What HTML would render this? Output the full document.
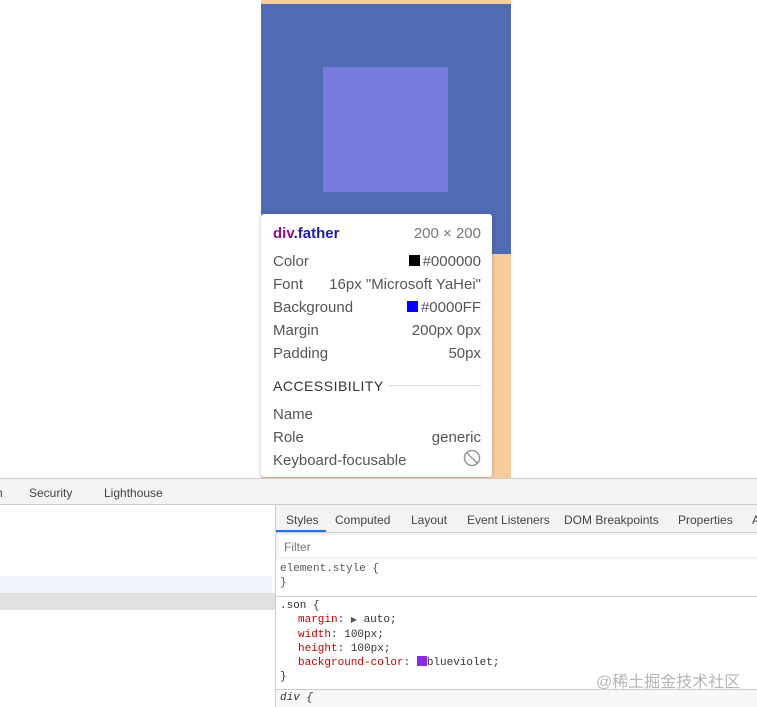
<!DOCTYPE html>
<html><head><style>
*{margin:0;padding:0;box-sizing:border-box}
body{width:757px;height:707px;position:relative;overflow:hidden;background:#fff;font-family:"Liberation Sans","Noto Sans CJK SC",sans-serif}
.a{position:absolute}
.row{position:absolute;left:12px;right:11px;display:flex;justify-content:space-between;font-size:15px;color:#555}
.mono{font-family:"Liberation Mono",monospace;font-size:11px;color:#333}
.tab{position:absolute;top:8px;font-size:12px;color:#444}
.p{color:#c80000}
.ind{padding-left:18px}
</style></head><body>
<div class="a" style="left:261px;top:0;width:250px;height:478px;background:#f9cc9d"></div>
<div class="a" style="left:261px;top:4px;width:250px;height:250px;background:#4f6bb4"></div>
<div class="a" style="left:323px;top:67px;width:125px;height:125px;background:#777bdc"></div>
<div class="a" style="left:261px;top:214px;width:231px;height:263px;background:#fff;border-radius:3px;box-shadow:0 1px 4px rgba(0,0,0,.25)">
 <div class="row" style="top:11px"><span style="font-weight:bold;color:#881280">div<span style="color:#1a1aa6">.father</span></span><span style="color:#777">200 × 200</span></div>
 <div class="row" style="top:39px"><span>Color</span><span><span style="display:inline-block;width:11px;height:11px;background:#000;margin-right:3px"></span>#000000</span></div>
 <div class="row" style="top:62px"><span>Font</span><span>16px "Microsoft YaHei"</span></div>
 <div class="row" style="top:85px"><span>Background</span><span><span style="display:inline-block;width:11px;height:11px;background:#00f;margin-right:3px"></span>#0000FF</span></div>
 <div class="row" style="top:108px"><span>Margin</span><span>200px 0px</span></div>
 <div class="row" style="top:131px"><span>Padding</span><span>50px</span></div>
 <div class="row" style="top:164px;color:#333;font-size:14px;letter-spacing:.5px"><span>ACCESSIBILITY</span></div>
 <div class="a" style="left:127px;top:171px;width:93px;height:1px;background:#ddd"></div>
 <div class="row" style="top:192px"><span>Name</span><span></span></div>
 <div class="row" style="top:215px"><span>Role</span><span>generic</span></div>
 <div class="row" style="top:238px"><span>Keyboard-focusable</span><span><svg width="18" height="18" viewBox="0 0 18 18" style="margin-top:-3px"><circle cx="9" cy="9" r="7.5" fill="none" stroke="#999" stroke-width="1.5"/><line x1="4" y1="4" x2="14" y2="14" stroke="#999" stroke-width="1.5"/></svg></span></div>
</div>
<div class="a" style="left:0;top:478px;width:757px;height:27px;background:#f3f3f3;border-top:1px solid #ccc;border-bottom:1px solid #ccc">
 <span class="tab" style="left:-4px;top:7px">n</span>
 <span class="tab" style="left:29px;top:7px">Security</span>
 <span class="tab" style="left:104px;top:7px">Lighthouse</span>
</div>
<div class="a" style="left:0;top:576px;width:272px;height:17px;background:#eef3fb"></div>
<div class="a" style="left:0;top:593px;width:275px;height:17px;background:#e0e0e0"></div>
<div class="a" style="left:275px;top:505px;width:1px;height:202px;background:#ccc"></div>
<div class="a" style="left:276px;top:505px;width:481px;height:28px;background:#f3f3f3;border-bottom:1px solid #ccc">
 <span class="tab" style="left:10px">Styles</span>
 <div class="a" style="left:0;top:25px;width:50px;height:2px;background:#1a73e8"></div>
 <span class="tab" style="left:59px">Computed</span>
 <span class="tab" style="left:135px">Layout</span>
 <span class="tab" style="left:191px">Event Listeners</span>
 <span class="tab" style="left:288px">DOM Breakpoints</span>
 <span class="tab" style="left:402px">Properties</span>
 <span class="tab" style="left:476px">A</span>
</div>
<div class="a" style="left:276px;top:533px;width:481px;height:26px;background:#f3f3f3"><div class="a" style="left:3px;top:2px;width:478px;height:22px;background:#fff;font-size:12px;color:#777;padding:5px 0 0 5px">Filter</div></div>
<div class="a mono" style="left:280px;top:562px;line-height:14px;color:#555">element.style {<br>}</div>
<div class="a" style="left:276px;top:596px;width:481px;height:1px;background:#ccc"></div>
<div class="a mono" style="left:280px;top:599px;line-height:14px">.son {<div class="ind"><span class="p">margin</span>: <span style="font-size:8px;color:#555">▶</span> auto;</div><div class="ind"><span class="p">width</span>: 100px;</div><div class="ind"><span class="p">height</span>: 100px;</div><div class="ind"><span class="p">background-color</span>: <span style="display:inline-block;width:10px;height:10px;background:#8a2be2;vertical-align:-1px"></span>blueviolet;</div>}</div>
<div class="a" style="left:276px;top:689px;width:481px;height:18px;background:#f8f8f8;border-top:1px solid #ccc"></div>
<div class="a mono" style="left:280px;top:692px;font-style:italic">div {</div>
<div class="a" style="left:596px;top:668px;font-size:16px;color:rgba(150,150,150,.7)">@稀土掘金技术社区</div>
</body></html>
